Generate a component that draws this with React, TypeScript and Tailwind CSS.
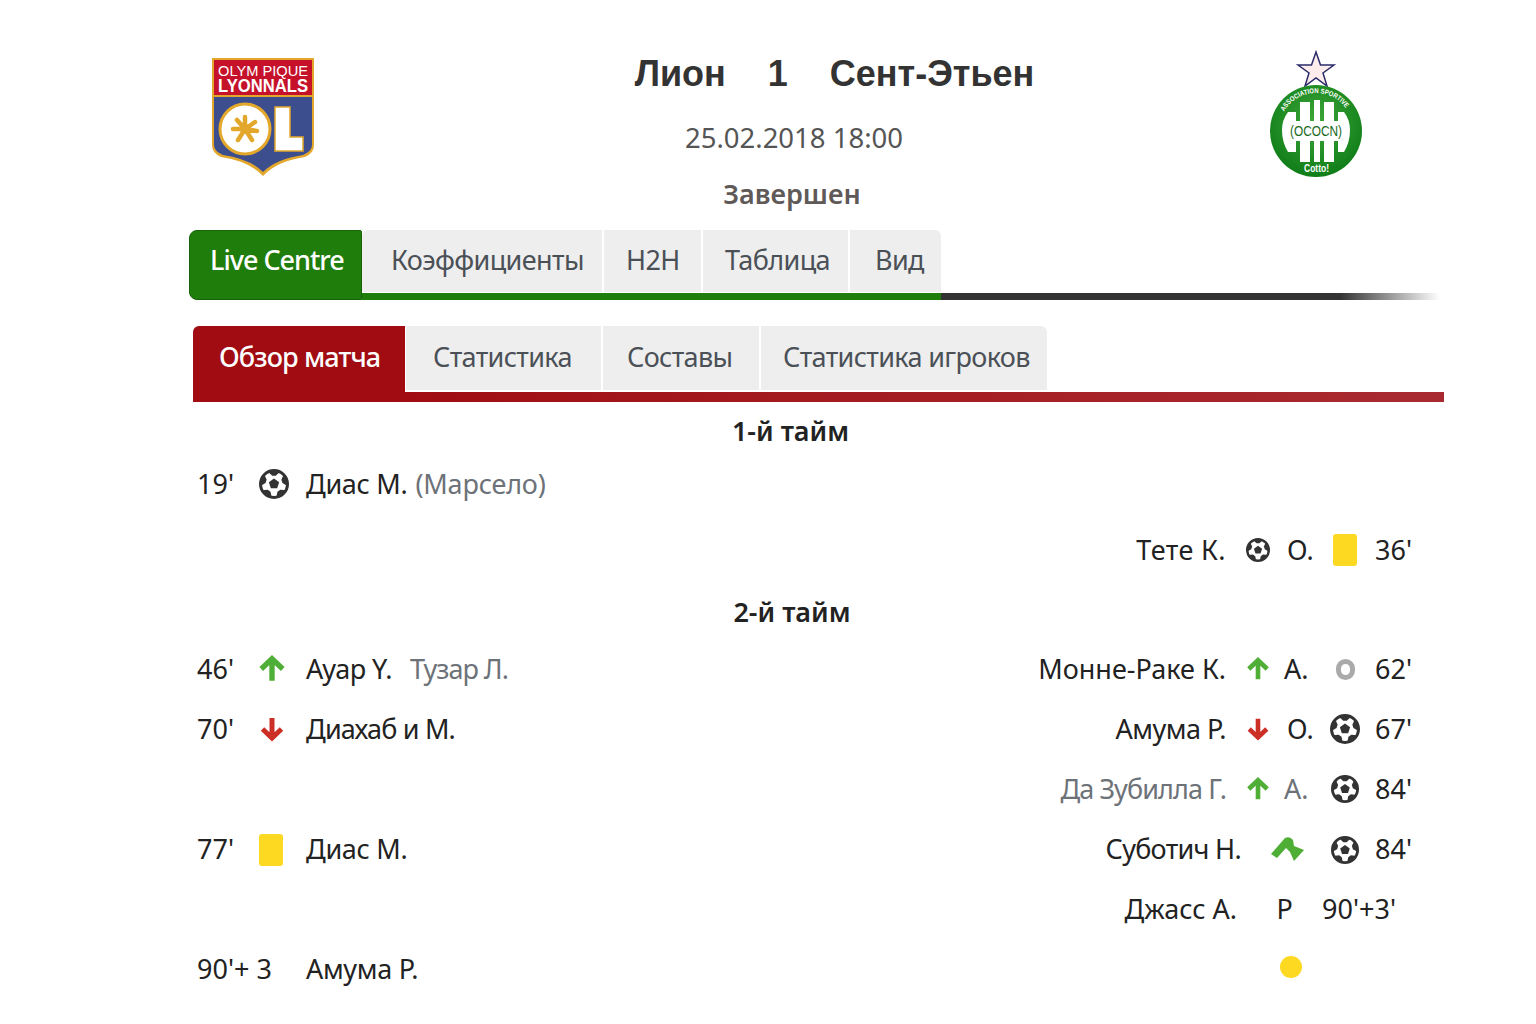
import React from "react";

const sans = "font-['Noto_Sans',sans-serif]";

const ballPatches = [-90, -18, 54, 126, 198].map((deg) => {
  const rad = (a: number) => (a * Math.PI) / 180;
  const pt = (a: number, r: number) => `${15 + r * Math.cos(rad(a))},${15 + r * Math.sin(rad(a))}`;
  return [pt(deg - 27, 14), pt(deg, 14.5), pt(deg + 27, 14), pt(deg + 12, 8.5), pt(deg - 12, 8.5)].join(" ");
});

const pentagon = [-90, -18, 54, 126, 198]
  .map((deg) => `${15 + 5.4 * Math.cos((deg * Math.PI) / 180)},${15 + 5.4 * Math.sin((deg * Math.PI) / 180)}`)
  .join(" ");

function Ball({ size = 30 }: { size?: number }) {
  return (
    <svg width={size} height={size} viewBox="0 0 30 30">
      <circle cx="15" cy="15" r="13.500" fill="#fff" stroke="#333" strokeWidth="3" />
      <polygon points={pentagon} fill="#333" />
      {ballPatches.map((p) => (
        <polygon key={p} points={p} fill="#333" />
      ))}
    </svg>
  );
}

function ArrowUp({ size = 28 }: { size?: number }) {
  return (
    <svg width={size} height={size} viewBox="0 0 26 26">
      <path d="M13 3 L13 24 M3 13 L13 3.500 L23 13" fill="none" stroke="#4fae35" strokeWidth="5" />
    </svg>
  );
}

function ArrowDown({ size = 26 }: { size?: number }) {
  return (
    <svg width={size} height={size} viewBox="0 0 26 26">
      <path d="M13 2 L13 22 M3.500 13 L13 22 L22.500 13" fill="none" stroke="#cc2f26" strokeWidth="5" />
    </svg>
  );
}

function SwapArrow() {
  return (
    <svg width="34" height="26" viewBox="0 0 34 26">
      <path d="M0 17 L14 1 Q19 -1 22 3 L23 9 L33 13 L23 24 L19 15 L15 11 L6 21 Z" fill="#4fae35" />
    </svg>
  );
}

function YellowCard() {
  return <div className="w-[24px] h-[32px] rounded-[3px] bg-[#fdd922]" />;
}

function OlLogo() {
  return (
    <svg width="104" height="120" viewBox="0 0 104 120">
      <path d="M1 1 H103 V88 Q103 96 94 100 Q66 104 52 119 Q38 104 10 100 Q1 96 1 88 Z" fill="#e3a82b" />
      <path d="M3 3 H101 V88 Q101 94 92 98 Q65 102 52 115 Q39 102 12 98 Q3 94 3 88 Z" fill="#3d4e8f" />
      <rect x="3" y="3" width="98" height="37" fill="#c5122a" />
      <rect x="3" y="38" width="98" height="2" fill="#e3a82b" />
      <text x="7" y="19" textLength="90" lengthAdjust="spacingAndGlyphs" fontFamily="'Liberation Sans'" fontSize="14" fill="#fff">OLYM PIQUE</text>
      <text x="7" y="35" textLength="90" lengthAdjust="spacingAndGlyphs" fontFamily="'Liberation Sans'" fontWeight="700" fontSize="18" fill="#fff">LYONNALS</text>
      <circle cx="34" cy="72" r="25" fill="#fff" stroke="#e3a82b" strokeWidth="3" />
      <g stroke="#e3a82b" strokeWidth="4.500" strokeLinecap="round">
        <path d="M34 72 L34 60 M34 72 L44 65 M34 72 L46 74 M34 72 L41 83 M34 72 L27 83 M34 72 L22 72 M34 72 L26 63" />
      </g>
      <circle cx="34" cy="72" r="5" fill="#e3a82b" />
      <path d="M64 50 H79 V80 H92 V94 H64 Z" fill="#fff" stroke="#e3a82b" strokeWidth="1.500" />
    </svg>
  );
}

function AsseLogo() {
  return (
    <svg width="92" height="128" viewBox="0 0 92 128">
      <defs>
        <radialGradient id="g" cx="50%" cy="40%" r="60%">
          <stop offset="0%" stopColor="#3fa83a" />
          <stop offset="100%" stopColor="#0f7d18" />
        </radialGradient>
      </defs>
      <path d="M46 2 L50.500 15 L64 15 L53 23 L57 36 L46 28 L35 36 L39 23 L28 15 L41.500 15 Z" fill="#fdecec" stroke="#2b2b6b" strokeWidth="1.500" />
      <circle cx="46" cy="81" r="46" fill="url(#g)" />
      <path d="M18 62 H26 V102 H18 Q12 92 12 80 Q12 70 18 62 Z M30 52 H40 V112 H30 Z M44 50 H50 V112 H44 Z M54 52 H64 V112 H54 Z M68 62 H74 Q80 70 80 80 Q80 92 74 102 H68 Z" fill="#fff" />
      <rect x="18" y="71" width="56" height="20" fill="#fff" />
      <text x="20" y="86" textLength="52" lengthAdjust="spacingAndGlyphs" fontFamily="'Liberation Sans'" fontSize="15" fill="#17691c">(OCOCN)</text>
      <text x="34" y="122" textLength="25" lengthAdjust="spacingAndGlyphs" fontFamily="'Liberation Sans'" fontWeight="700" fontSize="10" fill="#fff">Cotto!</text>
      <path id="arc" d="M14 61.500 A37 37 0 0 1 78 61.500" fill="none" />
      <text fontFamily="'Liberation Sans'" fontSize="7" fontWeight="700" fill="#fff">
        <textPath href="#arc" textLength="73" lengthAdjust="spacingAndGlyphs">ASSOCIATION SPORTIVE</textPath>
      </text>
    </svg>
  );
}

function Row({ className = "h-[60px]", children }: { className?: string; children: React.ReactNode }) {
  return <div className={`flex items-center text-[27px] text-[#222] ${className}`}>{children}</div>;
}

function Left({ min, icon, name, nameClass = "", extra }: { min: string; icon?: React.ReactNode; name: string; nameClass?: string; extra?: React.ReactNode }) {
  return (
    <div className="flex items-center">
      <span className="w-[62px] whitespace-nowrap">{min}</span>
      <span className="w-[47px] flex items-center">{icon}</span>
      <span className={`tracking-[-0.3px] ${nameClass}`}>{name}</span>
      {extra}
    </div>
  );
}

function Right({ name, nameClass = "", icon, letter, icon2, min, grey }: { name: string; nameClass?: string; icon: React.ReactNode; letter: React.ReactNode; icon2: React.ReactNode; min: string; grey?: boolean }) {
  return (
    <div className="ml-auto flex items-center">
      <span className={`${nameClass} ${grey ? "text-[#6d7278]" : ""}`}>{name}</span>
      <span className="w-[58px] pl-[6px] flex justify-center">{icon}</span>
      <span className={`w-[38px] ${grey ? "text-[#6d7278]" : ""}`}>{letter}</span>
      <span className="w-[46px] flex justify-center">{icon2}</span>
      <span className="w-[46px] pl-[7px]">{min}</span>
    </div>
  );
}

export default function App() {
  return (
    <div className={`h-[1024px] overflow-hidden bg-white pl-[189px] pr-[92px] ${sans}`}>
      <div className="flex h-[230px] pt-[50px]">
        <div className="w-[192px] pl-[22px] pt-[7px]">
          <OlLogo />
        </div>
        <div className="w-[870px] flex flex-col items-center">
          <div className="flex text-[36px] leading-[48px] font-bold text-[#333] font-['Liberation_Sans',sans-serif] gap-[42px] ml-[37px]">
            <span>Лион</span>
            <span>1</span>
            <span>Сент-Этьен</span>
          </div>
          <div className="mt-[20px] text-[27.5px] leading-[40px] text-[#555] ml-[-44px]">25.02.2018 18:00</div>
          <div className="mt-[16px] text-[27px] leading-[40px] font-semibold text-[#5f5a58] ml-[-48px]">Завершен</div>
        </div>
        <div className="pl-[19px]">
          <AsseLogo />
        </div>
      </div>

      <div className="flex items-start">
        <div className="w-[173px] h-[70px] rounded-l-[8px] rounded-tr-[2px] bg-[#1f7d0c] border border-[#166308] text-white text-[27px] leading-[58px] pl-[20px] font-medium tracking-[-1px]">
          Live Centre
        </div>
        <div className="flex-1 pr-[4px]">
          <div className="flex gap-[2px] h-[62px] text-[27px] text-[#4b5057] leading-[60px] tracking-[-0.6px]">
            <div className="w-[240px] bg-[#eee] rounded-tl-[6px] pl-[29px]">Коэффициенты</div>
            <div className="w-[97px] bg-[#eee] pl-[22px]">H2H</div>
            <div className="w-[145px] bg-[#eee] pl-[22px]">Таблица</div>
            <div className="w-[91px] bg-[#eee] rounded-tr-[6px] pl-[25px]">Вид</div>
          </div>
          <div className="flex h-[7px] mt-[1px]">
            <div className="w-[579px] bg-[#1f7d0c]" />
            <div className="w-[499px] bg-gradient-to-r from-[#333] from-[80%] to-transparent" />
          </div>
        </div>
      </div>

      <div className="flex items-start mt-[26px] ml-[4px]">
        <div className="w-[212px] h-[76px] rounded-tl-[6px] bg-[#a00c12] text-white text-[27px] font-medium leading-[62px] pl-[26px] tracking-[-0.9px]">
          Обзор матча
        </div>
        <div className="flex-1">
          <div className="flex gap-[2px] h-[64px] pl-[1px] text-[27px] text-[#4b5057] leading-[62px] tracking-[-0.65px]">
            <div className="w-[195px] bg-[#eee] pl-[27px]">Статистика</div>
            <div className="w-[156px] bg-[#eee] pl-[24px]">Составы</div>
            <div className="w-[286px] bg-[#eee] rounded-tr-[6px] pl-[22px]">Статистика игроков</div>
          </div>
          <div className="h-[10px] mt-[2px] bg-gradient-to-r from-[#a00c12] to-[#a82a30]" />
        </div>
      </div>

      <div className="pl-[8px] pr-[30px]">
        <div className="text-center text-[27px] leading-[58px] font-semibold text-[#222] pr-[30px]">1-й тайм</div>
        <Row className="h-[48px]">
          <Left
            min="19'"
            icon={<Ball />}
            name="Диас М."
            extra={<span className="ml-[8px] text-[#6d7278] tracking-[-0.2px]">(Марсело)</span>}
          />
        </Row>
        <Row className="h-[84px]">
          <Right
            name="Тете К."
            nameClass="tracking-[0.4px]"
            icon={<Ball size={24} />}
            letter={<span className="pl-[3px]">О.</span>}
            icon2={<YellowCard />}
            min="36'"
          />
        </Row>
        <div className="text-center text-[27px] leading-[40px] font-semibold text-[#222] pr-[27px]">2-й тайм</div>
        <Row className="h-[60px] mt-[7px]">
          <Left
            min="46'"
            icon={<span className="ml-[-1px]"><ArrowUp /></span>}
            name="Ауар Y."
            nameClass="tracking-[-0.5px]"
            extra={<span className="ml-[18px] text-[#6d7278] tracking-[-1px]">Тузар Л.</span>}
          />
          <Right name="Монне-Раке К." icon={<ArrowUp size={24} />} letter="А." icon2={<div className="w-[19px] h-[21px] rounded-full border-[5px] border-[#aaa]" />} min="62'" />
        </Row>
        <Row>
          <Left min="70'" icon={<ArrowDown />} name="Диахаб и М." nameClass="tracking-[-0.8px]" />
          <Right name="Амума Р." nameClass="tracking-[-0.5px]" icon={<ArrowDown size={24} />} letter={<span className="pl-[3px]">О.</span>} icon2={<Ball />} min="67'" />
        </Row>
        <Row>
          <Right grey name="Да Зубилла Г." nameClass="tracking-[-0.9px]" icon={<ArrowUp size={24} />} letter="А." icon2={<Ball size={28} />} min="84'" />
        </Row>
        <Row className="h-[60px] pt-[1px]">
          <Left min="77'" icon={<YellowCard />} name="Диас М." />
          <div className="ml-auto flex items-center">
            <span className="tracking-[-0.7px]">Суботич Н.</span>
            <span className="w-[81px] pl-[12px] flex justify-center"><SwapArrow /></span>
            <span className="w-[46px] flex justify-center"><Ball size={28} /></span>
            <span className="w-[46px] pl-[7px]">84'</span>
          </div>
        </Row>
        <Row>
          <div className="ml-auto flex items-center pr-[18px]">
            <span>Джасс А.</span>
            <span className="w-[85px] text-center pl-[10px]">Р</span>
            <span>90'+3'</span>
          </div>
        </Row>
        <Row>
          <Left min="90'+ 3" name="Амума Р." />
          <div className="ml-auto pr-[112px] pb-[4px]">
            <div className="w-[22px] h-[22px] rounded-full bg-[#fdd922]" />
          </div>
        </Row>
      </div>
    </div>
  );
}
